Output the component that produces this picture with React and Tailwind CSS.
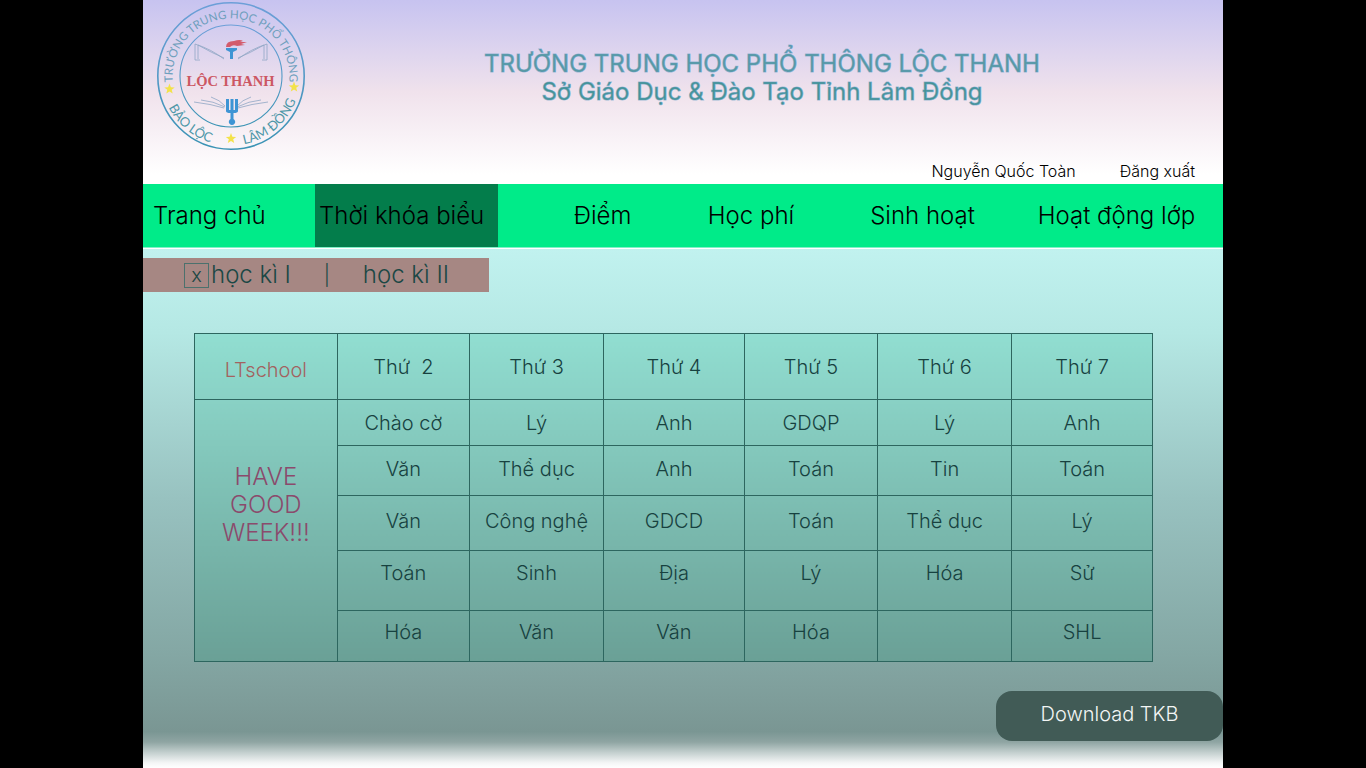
const days = ["Thứ\u00a0 2", "Thứ 3", "Thứ 4", "Thứ 5", "Thứ 6", "Thứ 7"];

const lessons = [
  { height: "h-[46px]", cells: ["Chào cờ", "Lý", "Anh", "GDQP", "Lý", "Anh"] },
  { height: "h-[50px] pb-1", cells: ["Văn", "Thể dục", "Anh", "Toán", "Tin", "Toán"] },
  { height: "h-[55px] pb-1", cells: ["Văn", "Công nghệ", "GDCD", "Toán", "Thể dục", "Lý"] },
  { height: "h-[60px] pb-4", cells: ["Toán", "Sinh", "Địa", "Lý", "Hóa", "Sử"] },
  { height: "h-[51px] pb-2", cells: ["Hóa", "Văn", "Văn", "Hóa", "", "SHL"] },
];

const line = "border border-[#2d665f]";

function Star({ x, y }) {
  return (
    <path
      transform={`translate(${x} ${y})`}
      d="M0 -5.4 L1.4 -1.7 L5.2 -1.6 L2.2 0.8 L3.2 4.5 L0 2.4 L-3.2 4.5 L-2.2 0.8 L-5.2 -1.6 L-1.4 -1.7Z"
      fill="#f3e24a"
    />
  );
}

function Logo() {
  return (
    <svg viewBox="0 0 148 148" className="size-[148px] shrink-0" role="img" aria-label="Logo">
      <defs>
        <linearGradient id="ring" x1="0" y1="0" x2="0" y2="1">
          <stop offset="0" stopColor="#6c9fd8" />
          <stop offset="1" stopColor="#3a93b4" />
        </linearGradient>
        <path id="arcTop" d="M16.2 84 A58.5 58.5 0 1 1 131.8 84" />
        <path id="arcLeft" d="M9.5 101 A70 70 0 0 0 70 143.5" />
        <path id="arcRight" d="M72 143.5 A70 70 0 0 0 142 88" />
      </defs>
      <circle cx="74" cy="74" r="73.2" fill="none" stroke="url(#ring)" strokeWidth="1.6" />
      <circle cx="74" cy="74" r="51" fill="none" stroke="url(#ring)" strokeWidth="1.1" />
      <g fill="#6f9fbd" fontFamily="Lato, Inter, sans-serif" fontSize="11.5">
        <text textAnchor="middle">
          <textPath href="#arcTop" startOffset="50%">TRƯỜNG TRUNG HỌC PHỔ THÔNG</textPath>
        </text>
        <text fill="#4d97a8" fontSize="13">
          <textPath href="#arcLeft" startOffset="5">BẢO LỘC</textPath>
        </text>
        <text fill="#4d97a8" fontSize="13">
          <textPath href="#arcRight" startOffset="15">LÂM ĐỒNG</textPath>
        </text>
      </g>
      <g fill="none" stroke="#8fa6c4" strokeWidth="0.8">
        <path d="M67 56 Q55 51 41 43 V57 M67 57 Q54 47 38 42 V58 H43" />
        <path d="M81 56 Q93 51 107 43 V57 M81 57 Q94 47 110 42 V58 H105" />
        <path d="M37 100 Q54 102 67 106 M44 98 Q56 99 68 105 M54 95 Q63 98 68 104" />
        <path d="M111 100 Q94 102 81 106 M104 98 Q92 99 80 105 M94 95 Q85 98 80 104" />
      </g>
      <path d="M69 45 Q69 39 77 39 Q83 37 86 39 L83 40 L90 40 L84 42 L88 43 L80 44 Q76 42 73 45Z" fill="#d35b6c" />
      <path d="M69 46 H80 V48 L76 50 V57 H73 V50 L69 48Z" fill="#3e94d4" />
      <path d="M69 97 H72 V108 H73.5 V97 H76.5 V108 H78 V97 H81 V109 Q81 111 76.5 111 V117 A3.2 3.2 0 1 1 73.5 117 V111 Q69 111 69 109Z" fill="#3e94d4" />
      <text
        x="73.5"
        y="84"
        textAnchor="middle"
        fontFamily="'Liberation Serif', serif"
        fontSize="14.5"
        fontWeight="700"
        fill="#cc5763"
      >
        LỘC THANH
      </text>
      <Star x={12.5} y={87} />
      <Star x={74} y={136.5} />
      <Star x={137} y={85} />
    </svg>
  );
}

export default function App() {
  return (
    <div className="min-h-screen bg-black font-['Inter',sans-serif]">
      <div className="mx-auto flex min-h-screen max-w-[1080px] flex-col bg-white text-black">
        <header className="bg-linear-to-b from-[#c7c3f0] via-[#f0e2ec] to-white to-95% pb-0.5">
          <div className="flex pt-0.5 pl-3.5">
            <Logo />
            <h1 className="flex-1 pt-12 pr-1 text-center text-2xl leading-7 font-normal text-[#57999f] [-webkit-text-stroke:1px_#619dc499]">
              TRƯỜNG TRUNG HỌC PHỔ THÔNG LỘC THANH
              <span className="block text-[#43938f]">Sở Giáo Dục &amp; Đào Tạo Tỉnh Lâm Đồng</span>
            </h1>
          </div>
          <div className="flex justify-end gap-11 pt-2.5 pr-7 text-base leading-[22px] font-light">
            <span>Nguyễn Quốc Toàn</span>
            <a href="#logout">Đăng xuất</a>
          </div>
        </header>

        <nav className="grid h-16 grid-cols-[172fr_183fr_179fr_148fr_195fr_203fr] items-center border-b border-[#7ff0c8] bg-[#00eb89] text-center text-2xl font-light whitespace-nowrap">
          <a href="#home" className="pl-2.5 text-left">Trang chủ</a>
          <a href="#timetable" aria-current="page" className="flex h-full items-center bg-[#037d4b] pl-1">
            Thời khóa biểu
          </a>
          <a href="#marks" className="pl-[30px]">Điểm</a>
          <a href="#fees">Học phí</a>
          <a href="#activities">Sinh hoạt</a>
          <a href="#class" className="pr-2.5">Hoạt động lớp</a>
        </nav>

        <main className="flex flex-1 flex-col border-t border-white bg-[linear-gradient(to_bottom,#c1f2ef_0%,#b5e8e4_16%,#98c2c0_48%,#84a7a4_78%,#7a9693_93%,#8fa5a3_95%,#c3cfce_97%,#f4f6f6_99%,#fff_100%)] pt-[9px] pb-6 font-light">
          <div className="flex h-[34px] w-[346px] items-center bg-[#a68783] pl-[41px] text-2xl text-[#1b4845]">
            <label className="flex items-center gap-0.5">
              <span className="grid size-[25px] place-items-center border border-[#4b716d] text-xl leading-none">
                <input type="checkbox" defaultChecked className="col-start-1 row-start-1 size-full appearance-none" />
                <span className="pointer-events-none col-start-1 row-start-1">x</span>
              </span>
              học kì I
            </label>
            <span className="mx-auto text-xl">|</span>
            <a href="#semester-2" className="pr-10">học kì II</a>
          </div>

          <table className="mt-[41px] ml-[51px] w-[88.8%] table-fixed border-collapse bg-linear-to-b from-[#91ded1] to-[#6aa096] text-center text-xl leading-6 text-[#17413f]">
            <colgroup>
              <col className="w-[14.9%]" />
              <col className="w-[13.8%]" />
              <col className="w-[14%]" />
              <col className="w-[14.7%]" />
              <col className="w-[13.9%]" />
              <col className="w-[14%]" />
              <col className="w-[14.7%]" />
            </colgroup>
            <thead>
              <tr>
                <th scope="col" className={`${line} h-[66px] pt-1.5 font-light text-[#a3625f]`}>LTschool</th>
                {days.map((day) => (
                  <th key={day} scope="col" className={`${line} font-light`}>{day}</th>
                ))}
              </tr>
            </thead>
            <tbody>
              {lessons.map(({ height, cells }, row) => (
                <tr key={row}>
                  {row === 0 && (
                    <td rowSpan={5} className={`${line} pb-[52px] text-2xl leading-7 text-[#8b4a6c]`}>
                      HAVE
                      <br />
                      GOOD
                      <br />
                      WEEK!!!
                    </td>
                  )}
                  {cells.map((subject, i) => (
                    <td key={i} className={`${line} ${height}`}>{subject}</td>
                  ))}
                </tr>
              ))}
            </tbody>
          </table>

          <button type="button" className="mt-[29px] h-[50px] w-[227px] self-end rounded-2xl bg-[#415b56] pb-1 text-xl text-[#f3f6f5]">
            Download TKB
          </button>
        </main>
      </div>
    </div>
  );
}
